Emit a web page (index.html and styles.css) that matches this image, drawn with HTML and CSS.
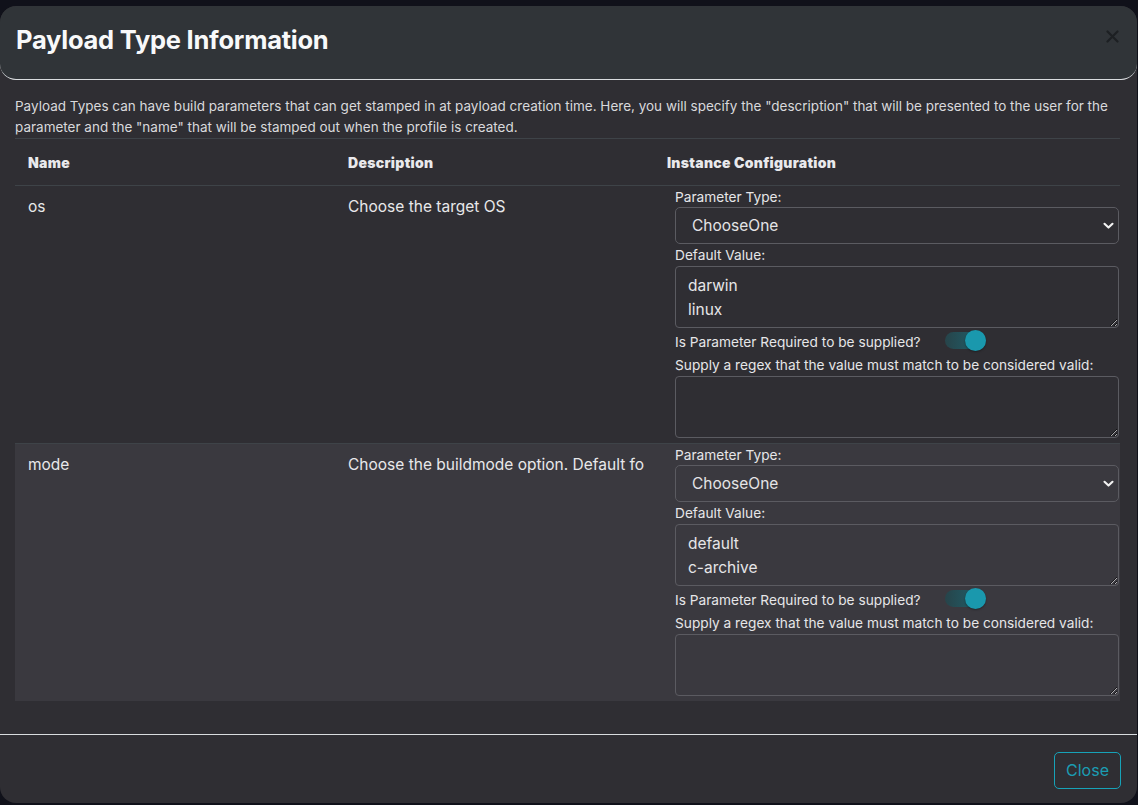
FILE: index.html
```html
<!DOCTYPE html>
<html lang="en">
<head>
<meta charset="utf-8">
<title>Payload Type Information</title>
<link rel="stylesheet" href="styles.css">
</head>
<body>
<div class="modal">
  <div class="modal-header">
    <h1 class="modal-title">Payload Type Information</h1>
    <button class="btn-close" aria-label="Close">
      <svg width="13" height="13" viewBox="0 0 13 13"><path d="M1.5 1.5 L11.5 11.5 M11.5 1.5 L1.5 11.5" stroke="#1d2023" stroke-width="2.2" stroke-linecap="round"/></svg>
    </button>
  </div>
  <div class="modal-body">
    <p class="intro">Payload Types can have build parameters that can get stamped in at payload creation time. Here, you will specify the "description" that will be presented to the user for the parameter and the "name" that will be stamped out when the profile is created.</p>
    <table class="params">
      <colgroup><col class="c-name"><col class="c-desc"><col class="c-conf"></colgroup>
      <thead>
        <tr><th>Name</th><th>Description</th><th>Instance Configuration</th></tr>
      </thead>
      <tbody>
        <tr>
          <td class="cell">os</td>
          <td class="cell desc"><div class="clip">Choose the target OS</div></td>
          <td class="conf">
            <div class="lbl">Parameter Type:</div>
            <div class="select"><span>ChooseOne</span><svg width="11" height="8" viewBox="0 0 11 8"><path d="M1.5 1.8 L5.5 5.6 L9.5 1.8" fill="none" stroke="#f2f2f2" stroke-width="2.1" stroke-linecap="round" stroke-linejoin="round"/></svg></div>
            <div class="lbl">Default Value:</div>
            <textarea class="ta">darwin
linux</textarea>
            <div class="req"><span>Is Parameter Required to be supplied?</span><span class="switch"><span class="knob"></span></span></div>
            <div class="lbl">Supply a regex that the value must match to be considered valid:</div>
            <textarea class="ta"></textarea>
          </td>
        </tr>
        <tr class="alt">
          <td class="cell">mode</td>
          <td class="cell desc"><div class="clip">Choose the buildmode option. Default fo</div></td>
          <td class="conf">
            <div class="lbl">Parameter Type:</div>
            <div class="select"><span>ChooseOne</span><svg width="11" height="8" viewBox="0 0 11 8"><path d="M1.5 1.8 L5.5 5.6 L9.5 1.8" fill="none" stroke="#f2f2f2" stroke-width="2.1" stroke-linecap="round" stroke-linejoin="round"/></svg></div>
            <div class="lbl">Default Value:</div>
            <textarea class="ta">default
c-archive</textarea>
            <div class="req"><span>Is Parameter Required to be supplied?</span><span class="switch"><span class="knob"></span></span></div>
            <div class="lbl">Supply a regex that the value must match to be considered valid:</div>
            <textarea class="ta"></textarea>
          </td>
        </tr>
      </tbody>
    </table>
  </div>
  <div class="modal-footer">
    <button class="btn-close-outline">Close</button>
  </div>
</div>
</body>
</html>
```

FILE: styles.css
```css
* { box-sizing: border-box; }
html, body { margin: 0; padding: 0; }
body {
  background: #10111a;
  font-family: Inter, "Liberation Sans", sans-serif;
  color: #e6e6e8;
  height: 805px;
  overflow: hidden;
}
.modal {
  margin-top: 6px;
  width: 1137px;
  height: 797px;
  background: #2f2e33;
  border-radius: 16px;
  overflow: hidden;
  display: flex;
  flex-direction: column;
}
.modal-header {
  height: 74px;
  flex: none;
  background: #303438;
  border-bottom: 1px solid #d9dcdf;
  border-radius: 16px;
  display: flex;
  align-items: center;
  justify-content: space-between;
  padding: 0 16px 0 16px;
}
.modal-title {
  margin: -6px 0 0 0;
  font-size: 25.5px;
  font-weight: 700;
  color: #f8f9fa;
  letter-spacing: -0.25px;
}
.btn-close {
  background: none;
  border: 0;
  padding: 0;
  margin-right: 2px;
  margin-top: -13px;
  width: 13px;
  height: 13px;
  display: flex;
}
.modal-body {
  flex: 1;
  padding: 16px 15px 0 15px;
}
.intro {
  margin: 0;
  font-size: 13.5px;
  line-height: 21px;
  color: #d9d9dc;
}
.params {
  width: 1105px;
  border-collapse: collapse;
  table-layout: fixed;
}
.c-name { width: 320px; }
.c-desc { width: 319px; }
.c-conf { width: 466px; }
.params th {
  text-align: left;
  font-size: 14px;
  font-weight: 900;
  letter-spacing: 0.3px;
  color: #e9e9ec;
  height: 47px;
  padding: 0 13px;
  border-top: 1px solid #3e4348;
  vertical-align: middle;
}
.params tbody tr { border-top: 1px solid #3e4348; }
.params tr.alt { background: #3a393f; }
.params td { vertical-align: top; }
.cell {
  padding: 9px 13px;
  font-size: 15.5px;
  line-height: 24px;
  color: #e8e8ea;
}
.cell.desc { padding-right: 9px; }
.clip {
  white-space: nowrap;
  overflow: hidden;
}
.conf {
  padding: 0 1px 5px 21px;
}
.lbl {
  margin-top: 2px;
  font-size: 13.7px;
  line-height: 19px;
  color: #e6e6e8;
}
.select {
  height: 37px;
  border: 1px solid #5b5b61;
  border-radius: 5px;
  display: flex;
  align-items: center;
  justify-content: space-between;
  padding: 0 4px 0 16px;
  font-size: 15.5px;
  color: #e4e4e6;
}
.ta {
  display: block;
  margin-top: 1px;
  width: 100%;
  height: 62px;
  background: transparent;
  border: 1px solid #5b5b61;
  border-radius: 4px;
  padding: 7px 12px;
  font-family: Inter, "Liberation Sans", sans-serif;
  font-size: 15.5px;
  line-height: 24px;
  color: #e6e6e8;
  resize: vertical;
  overflow: hidden;
}
.req {
  margin-top: 2px;
  height: 24px;
  display: flex;
  align-items: center;
  font-size: 13.7px;
  color: #e6e6e8;
}
.switch {
  position: relative;
  margin-left: 24px;
  width: 41px;
  height: 17px;
  border-radius: 9px;
  background: linear-gradient(90deg, #27444a, #1e6470);
  margin-top: -3px;
}
.knob {
  position: absolute;
  right: 0;
  top: -2px;
  width: 21px;
  height: 21px;
  border-radius: 50%;
  background: #1a98ad;
  box-shadow: 0 1px 2px rgba(0,0,0,0.35);
}
.modal-footer {
  flex: none;
  height: 69px;
  border-top: 1px solid #d9dcdf;
  display: flex;
  align-items: center;
  justify-content: flex-end;
  padding: 0 16px 0 0;
}
.btn-close-outline {
  height: 37px;
  width: 67px;
  margin-top: 2px;
  background: transparent;
  border: 1px solid #17a2b8;
  border-radius: 5px;
  color: #1b9db3;
  font-family: Inter, "Liberation Sans", sans-serif;
  font-size: 16px;
}
```
